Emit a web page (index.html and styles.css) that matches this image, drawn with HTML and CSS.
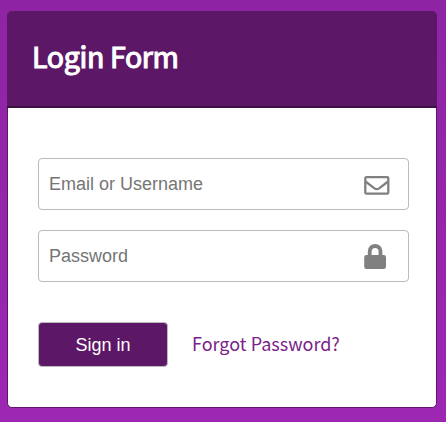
FILE: index.html
```html
<!DOCTYPE html>
<html lang="en">
<head>
<meta charset="utf-8">
<title>Login Form</title>
<link rel="stylesheet" href="styles.css">
</head>
<body>
<main class="card">
  <header class="card-header"><h1 class="title">Login Form</h1></header>
  <form class="form">
    <label class="field">
      <input class="input" type="text" placeholder="Email or Username">
      <svg class="icon" viewBox="0 0 26 26" aria-hidden="true"><g fill="none" stroke="#808080" stroke-width="2.3" stroke-linejoin="round"><rect x="1.3" y="6.1" width="23" height="16.6" rx="1.2"/><path d="M1.500 10.500L10.500 17.400Q12.800 19 15.100 17.400L24.100 10.500"/></g></svg>
    </label>
    <label class="field">
      <input class="input" type="password" placeholder="Password">
      <svg class="icon" viewBox="0 0 26 26" aria-hidden="true"><path fill="#808080" fill-rule="evenodd" d="M3.800 12V8.200a7.300 7.300 0 0 1 14.600 0V12h1.400a2.200 2.200 0 0 1 2.200 2.200v9.600a2.200 2.200 0 0 1-2.200 2.200H2.400A2.200 2.200 0 0 1 .2 23.800v-9.600A2.200 2.200 0 0 1 2.400 12zM7.600 12h7V8.400a3.500 3.500 0 0 0-7 0z"/></svg>
    </label>
    <div class="actions">
      <button class="button" type="button">Sign in</button>
      <a class="forgot" href="#">Forgot Password?</a>
    </div>
  </form>
</main>
</body>
</html>
```
FILE: styles.css
```css
* { box-sizing: border-box; }
html { height: 100%; }
body {
  margin: 0;
  height: 422px;
  padding: 11px 9px 14px 7px;
  overflow: hidden;
  background: linear-gradient(#8e24a4, #9c27b3);
  font-family: "Noto Sans CJK SC", "Noto Sans", sans-serif;
}
.card {
  height: 397px;
  background: #fff;
  border: 1px solid #5c1866;
  border-radius: 5px;
}
.card-header {
  height: 97px;
  margin: -1px -1px 0;
  padding: 0 25px 5px;
  display: flex;
  align-items: center;
  background: #5c1866;
  border-bottom: 2px solid #3d1044;
  border-radius: 5px 5px 0 0;
}
.title {
  margin: 0;
  color: #fff;
  font-size: 28.500px;
  font-weight: 400;
  -webkit-text-stroke: 1.1px #fff;
  letter-spacing: -0.35px;
  line-height: 40px;
}
.form { padding: 50px 27px 0 30px; }
.field {
  display: flex;
  align-items: center;
  width: 371px;
  height: 52px;
  margin-bottom: 20px;
  padding: 0 18px 0 10px;
  border: 1px solid #bbb;
  border-radius: 4px;
}
.input {
  flex: 1;
  min-width: 0;
  padding: 0;
  border: 0;
  outline: 0;
  background: none;
  font: 18px "Liberation Sans", sans-serif;
}
.input::placeholder { color: #757575; }
.icon { width: 26px; height: 26px; }
.actions {
  display: flex;
  align-items: center;
  gap: 24px;
  margin-top: 40px;
}
.button {
  width: 130px;
  height: 45px;
  padding: 2px 0 0;
  border: 1px solid #bbb;
  border-radius: 4px;
  background: #5c1866;
  color: #fff;
  font: 18px "Liberation Sans", sans-serif;
}
.forgot {
  padding-bottom: 4px;
  color: #7b1e8a;
  font-size: 18px;
  line-height: 28px;
  text-decoration: none;
}
```
